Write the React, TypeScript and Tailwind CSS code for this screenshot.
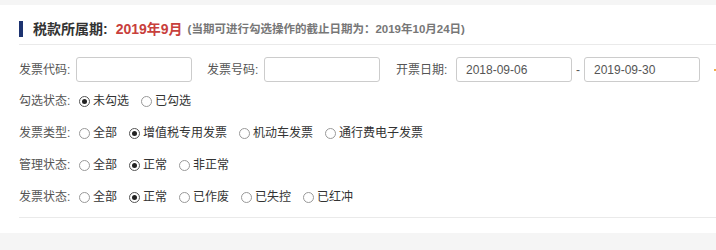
import React from "react";

const font = "font-['Liberation_Sans','Noto_Sans_CJK_SC',sans-serif]";

interface RadioGroupProps {
  label: string;
  options: string[];
  checked: number;
}

function Radio({ on }: { on: boolean }) {
  return (
    <span
      className={`flex h-[11px] w-[11px] shrink-0 items-center justify-center rounded-full border bg-white ${
        on ? "border-[#555]" : "border-[#999]"
      }`}
    >
      {on && <span className="h-[5px] w-[5px] rounded-full bg-[#222]" />}
    </span>
  );
}

function RadioRow({ label, options, checked }: RadioGroupProps) {
  return (
    <div className="flex h-[32px] items-center">
      <span className="w-[60px] shrink-0 text-[#555]">{label}</span>
      {options.map((opt, i) => (
        <label key={opt} className="mr-[12px] flex items-center text-[#333]">
          <Radio on={i === checked} />
          <span className="ml-[3px]">{opt}</span>
        </label>
      ))}
    </div>
  );
}

function TextField({ value }: { value?: string }) {
  return (
    <div className="flex h-[25px] w-[116px] shrink-0 items-center rounded-[3px] border border-[#ccc] bg-white pl-[9px] text-[12px] text-[#555]">
      {value}
    </div>
  );
}

export default function App() {
  return (
    <div className={`h-[250px] w-[716px] overflow-hidden bg-[#f5f5f5] pt-[5px] ${font} text-[12px] leading-[16px]`}>
      <div className="bg-white pb-[15px] pl-[19px]">
        {/* title */}
        <div className="flex items-center border-b border-[#eaeaea] pb-[7px] pt-[16px]">
          <span className="h-[16px] w-[4px] bg-[#1d3370]" />
          <span className="ml-[10px] text-[14px] font-bold text-[#333]">税款所属期:</span>
          <span className="ml-[8px] text-[14px] font-bold text-[#c8403c]">2019年9月</span>
          <span className="ml-[5px] text-[11.5px] font-bold text-[#777]">
            (当期可进行勾选操作的截止日期为：2019年10月24日)
          </span>
        </div>

        {/* inputs */}
        <div className="mt-[12px] flex h-[25px] items-center">
          <span className="w-[57px] shrink-0 text-[#555]">发票代码:</span>
          <TextField />
          <span className="ml-[15px] w-[57px] shrink-0 text-[#555]">发票号码:</span>
          <TextField />
          <span className="ml-[16px] w-[60px] shrink-0 text-[#555]">开票日期:</span>
          <TextField value="2018-09-06" />
          <span className="w-[12px] shrink-0 text-center text-[#555]">-</span>
          <TextField value="2019-09-30" />
          <span className="ml-[14px] h-[2px] w-[4px] shrink-0 bg-[#f0ad4e]" />
        </div>

        <div className="mt-[3px]">
          <RadioRow label="勾选状态:" options={["未勾选", "已勾选"]} checked={0} />
          <RadioRow
            label="发票类型:"
            options={["全部", "增值税专用发票", "机动车发票", "通行费电子发票"]}
            checked={1}
          />
          <RadioRow label="管理状态:" options={["全部", "正常", "非正常"]} checked={1} />
          <RadioRow
            label="发票状态:"
            options={["全部", "正常", "已作废", "已失控", "已红冲"]}
            checked={1}
          />
        </div>

        <div className="mt-[4px] border-b border-[#eaeaea]" />
      </div>
    </div>
  );
}
